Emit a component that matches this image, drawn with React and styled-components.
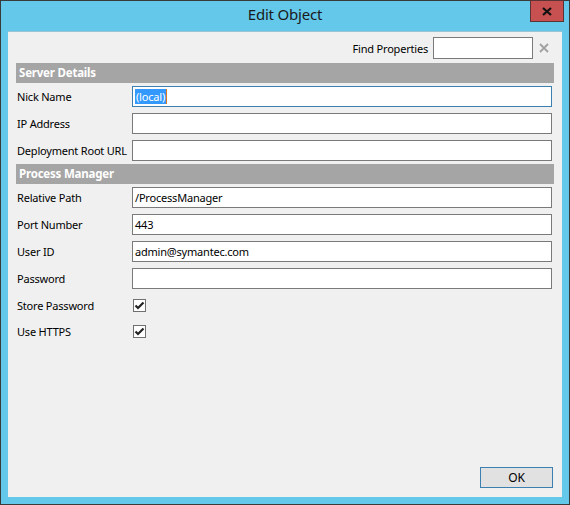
import React from "react";
import styled, { createGlobalStyle } from "styled-components";

const Global = createGlobalStyle`
  html, body { margin: 0; padding: 0; background: #63c8ea; }
  * { box-sizing: border-box; }
  body { font-family: "Noto Sans", "Open Sans", sans-serif; }
`;

const Window = styled.div`
  width: 570px;
  height: 505px;
  border: 1px solid #3a3a3a;
  background: #63c8ea;
  display: flex;
  flex-direction: column;
`;

const TitleBar = styled.div`
  height: 30px;
  position: relative;
  display: flex;
  align-items: center;
  justify-content: center;
`;

const Title = styled.div`
  font-size: 15px;
  color: #1a1a1a;
  margin-top: -4px;
  letter-spacing: -0.2px;
`;

const CloseButton = styled.div`
  position: absolute;
  top: -1px;
  right: 5px;
  width: 34px;
  height: 22px;
  background: #c75050;
  border: 1px solid #5a3434;
  display: flex;
  align-items: center;
  justify-content: center;
`;

const Client = styled.div`
  flex: 1;
  margin: 0 7px 7px 7px;
  background: #f0f0f0;
  border-top: 1px solid #9cc3d2;
  padding: 5px 8px 9px 8px;
  display: flex;
  flex-direction: column;
  font-family: "Noto Sans", "Open Sans", sans-serif;
  font-size: 11px;
  letter-spacing: -0.2px;
  color: #000;
`;

const FindRow = styled.div`
  display: flex;
  justify-content: flex-end;
  align-items: center;
  height: 22px;
`;

const FindLabel = styled.span`
  margin-right: 5px;
`;

const FindInput = styled.div`
  width: 100px;
  height: 22px;
  background: #fff;
  border: 1px solid #7a7a7a;
`;

const ClearX = styled.div`
  width: 21px;
  display: flex;
  justify-content: center;
  align-items: center;
`;

const SectionHeader = styled.div`
  margin-top: ${(p) => p.$top}px;
  height: 20px;
  line-height: 20px;
  background: #a5a5a5;
  color: #fff;
  font-weight: bold;
  font-size: 11.5px;
  padding-left: 3px;
`;

const Rows = styled.div`
  display: flex;
  flex-direction: column;
  gap: 6px;
  padding-top: 3px;
`;

const Row = styled.div`
  display: grid;
  grid-template-columns: 116px 420px;
  align-items: center;
  height: ${(p) => (p.$check ? 20 : 21)}px;
`;

const Label = styled.span`
  padding-left: 1px;
  white-space: nowrap;
`;

const TextBox = styled.div`
  height: 21px;
  background: #fff;
  border: 1px solid ${(p) => (p.$focus ? "#3c7fb1" : "#7a7a7a")};
  padding-left: 2px;
  display: flex;
  align-items: center;
  white-space: nowrap;
`;

const Selected = styled.span`
  background: #3399ff;
  color: #fff;
  line-height: 15px;
  padding: 0 1px 0 1px;
  border-right: 1px solid #d97a1e;
`;

const CheckBox = styled.div`
  width: 13px;
  height: 13px;
  margin-left: 1px;
  background: #fff;
  border: 1px solid #707070;
  display: flex;
  align-items: center;
  justify-content: center;
`;

const Footer = styled.div`
  margin-top: auto;
  display: flex;
  justify-content: flex-end;
  padding-right: 1px;
`;

const Button = styled.div`
  width: 73px;
  height: 21px;
  background: #e1e1e1;
  border: 1px solid #3c7fb1;
  font-size: 12px;
  display: flex;
  align-items: center;
  justify-content: center;
`;

const Check = () => (
  <svg width="11" height="11" viewBox="0 0 11 11">
    <path d="M1.5 5.5 L4 8 L9.5 2.5" fill="none" stroke="#222" strokeWidth="2.2" />
  </svg>
);

const serverRows = [
  { label: "Nick Name", value: "(local)", focus: true },
  { label: "IP Address", value: "" },
  { label: "Deployment Root URL", value: "" },
];

const pmRows = [
  { label: "Relative Path", value: "/ProcessManager" },
  { label: "Port Number", value: "443" },
  { label: "User ID", value: "admin@symantec.com" },
  { label: "Password", value: "" },
];

const checkRows = ["Store Password", "Use HTTPS"];

export default function App() {
  return (
    <>
      <Global />
      <Window>
        <TitleBar>
          <Title>Edit Object</Title>
          <CloseButton>
            <svg width="10" height="9" viewBox="0 0 10 9">
              <path d="M1 1 L9 8 M9 1 L1 8" stroke="#111" strokeWidth="2.2" />
            </svg>
          </CloseButton>
        </TitleBar>
        <Client>
          <FindRow>
            <FindLabel>Find Properties</FindLabel>
            <FindInput />
            <ClearX>
              <svg width="10" height="10" viewBox="0 0 10 10">
                <path d="M1 1 L9 9 M9 1 L1 9" stroke="#a0a0a0" strokeWidth="1.8" />
              </svg>
            </ClearX>
          </FindRow>
          <SectionHeader $top={4}>Server Details</SectionHeader>
          <Rows>
            {serverRows.map((r) => (
              <Row key={r.label}>
                <Label>{r.label}</Label>
                <TextBox $focus={r.focus}>
                  {r.focus ? <Selected>{r.value}</Selected> : r.value}
                </TextBox>
              </Row>
            ))}
          </Rows>
          <SectionHeader $top={3}>Process Manager</SectionHeader>
          <Rows>
            {pmRows.map((r) => (
              <Row key={r.label}>
                <Label>{r.label}</Label>
                <TextBox>{r.value}</TextBox>
              </Row>
            ))}
            {checkRows.map((l) => (
              <Row key={l} $check>
                <Label>{l}</Label>
                <CheckBox>
                  <Check />
                </CheckBox>
              </Row>
            ))}
          </Rows>
          <Footer>
            <Button>OK</Button>
          </Footer>
        </Client>
      </Window>
    </>
  );
}
